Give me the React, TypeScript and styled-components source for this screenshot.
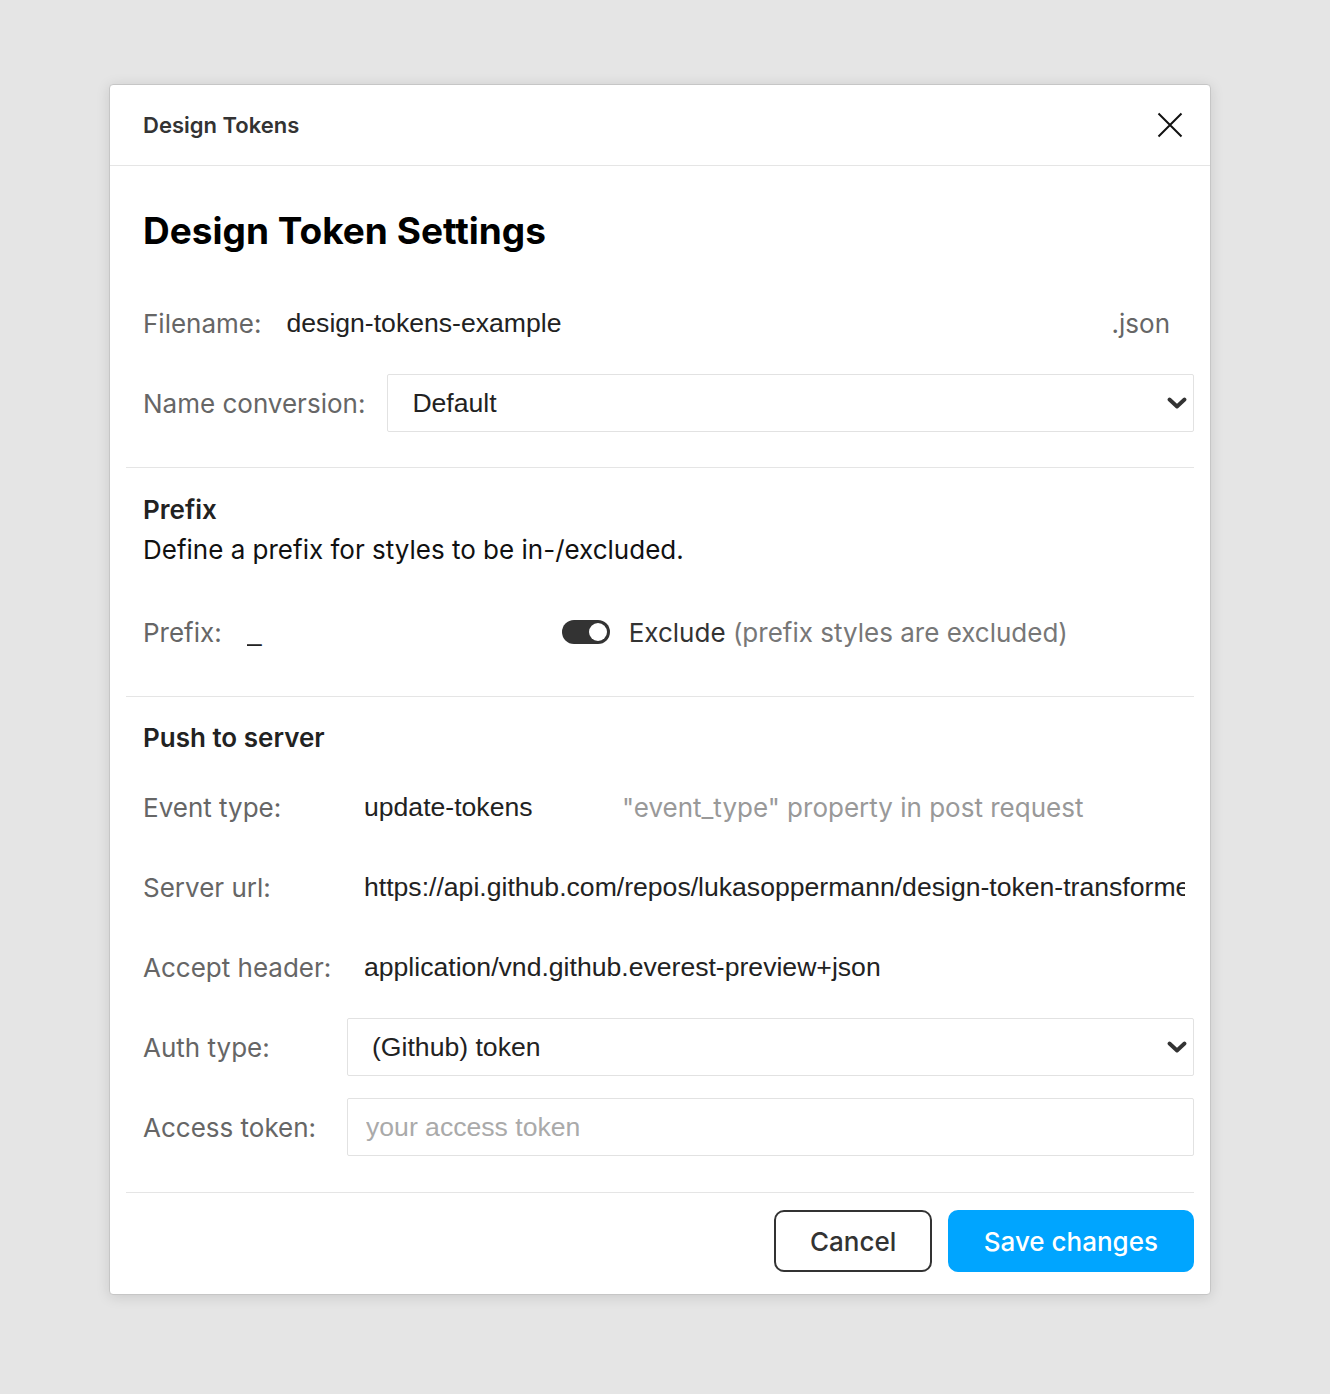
import React from 'react';
import styled, { createGlobalStyle } from 'styled-components';

const GlobalStyle = createGlobalStyle`
  html, body { margin: 0; padding: 0; background: #e5e5e5; }
  body { font-family: Inter, "Noto Sans", sans-serif; -webkit-font-smoothing: antialiased; }
  * { box-sizing: border-box; }
`;

const Page = styled.div`
  min-height: 1394px;
  padding: 84px 0 0 109px;
`;

const Dialog = styled.div`
  width: 1102px;
  background: #fff;
  border: 1px solid #c6c6c6;
  border-radius: 4px;
  box-shadow: 0 2px 14px rgba(0, 0, 0, 0.12);
  overflow: hidden;
`;

const Header = styled.header`
  height: 81px;
  border-bottom: 1px solid #e5e5e5;
  display: flex;
  align-items: center;
  justify-content: space-between;
  padding: 0 27px 0 33px;
`;

const HeaderTitle = styled.h1`
  margin: 0;
  font-size: 22px;
  font-weight: 600;
  color: #333;
`;

const CloseButton = styled.button`
  width: 26px;
  height: 26px;
  padding: 0;
  border: none;
  background: none;
  display: flex;
  align-items: center;
  justify-content: center;
  cursor: pointer;
`;

const Body = styled.div`
  padding: 0 16px 22px 17px;
`;

const Title = styled.h2`
  margin: 41px 0 0;
  padding-left: 16px;
  font-size: 37px;
  line-height: 48px;
  font-weight: 700;
  color: #000;
`;

const Row = styled.div<{ $mt: number }>`
  display: flex;
  align-items: center;
  height: 58px;
  margin-top: ${(p) => p.$mt}px;
  padding-left: 16px;
`;

const Label = styled.label<{ $width?: number; $gap?: number }>`
  flex: none;
  font-size: 26px;
  color: #666;
  width: ${(p) => (p.$width ? `${p.$width}px` : 'auto')};
  margin-right: ${(p) => p.$gap ?? 0}px;
  white-space: nowrap;
`;

const TextInput = styled.input<{ $bordered?: boolean; $width?: number; $pl?: number; $pr?: number }>`
  height: 58px;
  ${(p) => (p.$width ? `width: ${p.$width}px; flex: none;` : 'flex: 1; min-width: 0;')}
  border: 1px solid ${(p) => (p.$bordered ? '#e2e2e2' : 'transparent')};
  border-radius: 2px;
  padding: 0 ${(p) => p.$pr ?? 16}px 0 ${(p) => p.$pl ?? 16}px;
  font-family: "Liberation Sans", Arial, sans-serif;
  font-size: 26.6px;
  color: #222;
  background: #fff;
  outline: none;
  &::placeholder { color: #aaa; }
`;

const Suffix = styled.span`
  font-size: 26px;
  color: #666;
  margin: 0 24px 0 16px;
`;

const SelectWrap = styled.div`
  position: relative;
  flex: 1;
  height: 58px;
`;

const Select = styled.select`
  appearance: none;
  -webkit-appearance: none;
  width: 100%;
  height: 58px;
  border: 1px solid #e2e2e2;
  border-radius: 2px;
  padding: 0 40px 0 24px;
  font-family: "Liberation Sans", Arial, sans-serif;
  font-size: 26.6px;
  color: #222;
  background: #fff;
  outline: none;
`;

const Chevron = styled.svg`
  position: absolute;
  right: 7px;
  top: 50%;
  transform: translateY(-50%);
  pointer-events: none;
`;

const Divider = styled.hr<{ $mt: number }>`
  margin: ${(p) => p.$mt}px 0 0 -1px;
  border: none;
  border-top: 1px solid #e5e5e5;
  height: 0;
`;

const SectionTitle = styled.h3<{ $mt: number }>`
  margin: ${(p) => p.$mt}px 0 0;
  padding-left: 16px;
  font-size: 26px;
  line-height: 40px;
  font-weight: 600;
  color: #222;
`;

const Description = styled.p`
  margin: 0;
  padding-left: 16px;
  font-size: 26px;
  line-height: 40px;
  color: #111;
`;

const ToggleTrack = styled.button<{ $on: boolean }>`
  flex: none;
  position: relative;
  width: 48px;
  height: 24px;
  border-radius: 12px;
  border: none;
  padding: 0;
  background: ${(p) => (p.$on ? '#333' : '#ccc')};
  cursor: pointer;
`;

const ToggleKnob = styled.span<{ $on: boolean }>`
  position: absolute;
  top: 3px;
  left: ${(p) => (p.$on ? '27px' : '3px')};
  width: 18px;
  height: 18px;
  border-radius: 50%;
  background: #fff;
`;

const ToggleText = styled.span`
  margin-left: 19px;
  font-size: 26px;
  color: #333;
  white-space: nowrap;
`;

const Muted = styled.span`
  color: #777;
`;

const Hint = styled.span`
  margin-left: 16px;
  font-size: 26px;
  color: #999;
  white-space: nowrap;
`;

const Footer = styled.div`
  margin-top: 17px;
  display: flex;
  justify-content: flex-end;
  gap: 16px;
`;

const Button = styled.button<{ $primary?: boolean }>`
  height: 62px;
  padding: 0 ${(p) => (p.$primary ? 34 : 33.5)}px;
  border-radius: 10px;
  font-family: Inter, sans-serif;
  font-size: 26px;
  font-weight: 500;
  cursor: pointer;
  border: 2px solid ${(p) => (p.$primary ? '#00a5ff' : '#333')};
  background: ${(p) => (p.$primary ? '#00a5ff' : '#fff')};
  color: ${(p) => (p.$primary ? '#fff' : '#333')};
`;

const ChevronIcon = () => (
  <Chevron width="20" height="12" viewBox="0 0 20 12">
    <path d="M2.5 2.5 L10 9.5 L17.5 2.5" fill="none" stroke="#333" strokeWidth="3.8" strokeLinecap="round" strokeLinejoin="round" />
  </Chevron>
);

export default function App() {
  const [exclude, setExclude] = React.useState(true);
  return (
    <Page>
      <GlobalStyle />
      <Dialog>
        <Header>
          <HeaderTitle>Design Tokens</HeaderTitle>
          <CloseButton aria-label="Close">
            <svg width="26" height="26" viewBox="0 0 26 26">
              <path d="M1.5 1.5 L24.5 24.5 M24.5 1.5 L1.5 24.5" stroke="#111" strokeWidth="2" fill="none" />
            </svg>
          </CloseButton>
        </Header>
        <Body>
          <Title>Design Token Settings</Title>

          <Row $mt={39}>
            <Label $gap={8}>Filename:</Label>
            <TextInput defaultValue="design-tokens-example" />
            <Suffix>.json</Suffix>
          </Row>
          <Row $mt={22}>
            <Label $gap={22}>Name conversion:</Label>
            <SelectWrap>
              <Select defaultValue="default">
                <option value="default">Default</option>
                <option value="camel">camelCase</option>
                <option value="kebab">kebab-case</option>
              </Select>
              <ChevronIcon />
            </SelectWrap>
          </Row>

          <Divider $mt={35} />
          <SectionTitle $mt={22}>Prefix</SectionTitle>
          <Description>Define a prefix for styles to be in-/excluded.</Description>
          <Row $mt={33}>
            <Label $gap={8}>Prefix:</Label>
            <TextInput defaultValue="_" $width={332} />
            <ToggleTrack $on={exclude} onClick={() => setExclude(!exclude)} aria-label="Exclude">
              <ToggleKnob $on={exclude} />
            </ToggleTrack>
            <ToggleText>
              Exclude <Muted>(prefix styles are excluded)</Muted>
            </ToggleText>
          </Row>

          <Divider $mt={35} />
          <SectionTitle $mt={21}>Push to server</SectionTitle>
          <Row $mt={20}>
            <Label $width={204}>Event type:</Label>
            <TextInput defaultValue="update-tokens" $width={259} />
            <Hint>"event_type" property in post request</Hint>
          </Row>
          <Row $mt={22}>
            <Label $width={204}>Server url:</Label>
            <TextInput
              defaultValue="https://api.github.com/repos/lukasoppermann/design-token-transformer/dispatches"
              $pr={8}
            />
          </Row>
          <Row $mt={22}>
            <Label $width={204}>Accept header:</Label>
            <TextInput defaultValue="application/vnd.github.everest-preview+json" />
          </Row>
          <Row $mt={22}>
            <Label $width={204}>Auth type:</Label>
            <SelectWrap>
              <Select defaultValue="token">
                <option value="token">(Github) token</option>
                <option value="basic">Basic auth</option>
              </Select>
              <ChevronIcon />
            </SelectWrap>
          </Row>
          <Row $mt={22}>
            <Label $width={204}>Access token:</Label>
            <TextInput $bordered $pl={18} placeholder="your access token" />
          </Row>

          <Divider $mt={36} />
          <Footer>
            <Button>Cancel</Button>
            <Button $primary>Save changes</Button>
          </Footer>
        </Body>
      </Dialog>
    </Page>
  );
}
